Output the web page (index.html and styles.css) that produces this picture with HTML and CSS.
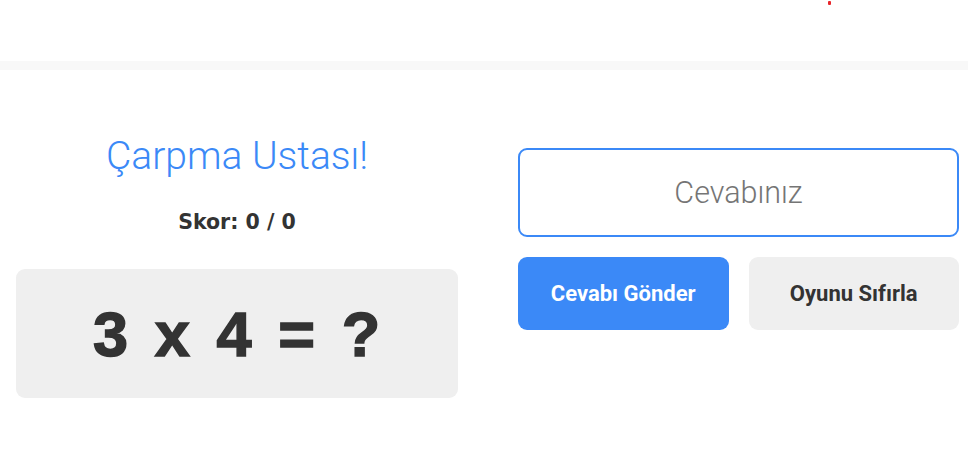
FILE: index.html
```html
<!DOCTYPE html>
<html lang="tr">
<head>
<meta charset="utf-8">
<title>Çarpma Ustası!</title>
<link rel="stylesheet" href="styles.css">
</head>
<body>
<header class="topbar"><span class="dot"></span></header>
<div class="band"></div>
<main class="game">
  <section class="left">
    <h1 class="title">Çarpma Ustası!</h1>
    <div class="score">Skor: 0 / 0</div>
    <div class="problem">3 x 4 = ?</div>
  </section>
  <section class="right">
    <input class="answer" type="text" placeholder="Cevabınız">
    <div class="actions">
      <button class="btn btn-primary">Cevabı Gönder</button>
      <button class="btn btn-secondary">Oyunu Sıfırla</button>
    </div>
  </section>
</main>
</body>
</html>
```
FILE: styles.css
```css
* { box-sizing: border-box; }
html, body { margin: 0; padding: 0; background: #fff; }
body { font-family: Roboto, "Noto Sans", sans-serif; color: #333; }

.topbar { height: 61px; position: relative; background: #fff; }
.dot { position: absolute; left: 828px; top: 1px; width: 3px; height: 4px; background: #e8262b; border-radius: 1px; }
.band { height: 9px; background: #f8f8f8; }

.game { display: flex; gap: 60px; padding: 62px 9px 0 16px; }
.left { width: 442px; display: flex; flex-direction: column; align-items: stretch; }
.right { width: 441px; margin-top: 16px; }

.title { margin: 0; font-size: 39px; font-weight: 300; line-height: 48px; color: #3b89f7; text-align: center; }
.score { margin-top: 27px; font-family: "DejaVu Sans", sans-serif; font-weight: 700; font-size: 20.5px; line-height: 30px; text-align: center; color: #333; }
.problem { margin-top: 32px; height: 129px; background: #efefef; border-radius: 9px; display: flex; align-items: center; justify-content: center; font-family: "Liberation Sans", Arial, sans-serif; font-weight: 700; font-size: 63px; letter-spacing: 4.6px; color: #333; -webkit-text-stroke: 1.5px #333; padding-left: 4px; }

.answer { display: block; width: 100%; height: 89px; border: 2px solid #3b89f7; border-radius: 9px; font-family: Roboto, sans-serif; font-weight: 300; font-size: 30.5px; text-align: center; color: #333; outline: none; background: #fff; }
.answer::placeholder { color: #757575; }

.actions { display: flex; gap: 20px; margin-top: 20px; }
.btn { flex: 1; height: 73px; border: none; border-radius: 9px; font-family: Roboto, sans-serif; font-weight: 700; font-size: 22px; cursor: pointer; }
.btn-primary { background: #3b89f7; color: #fff; }
.btn-secondary { background: #efefef; color: #333; }
```
